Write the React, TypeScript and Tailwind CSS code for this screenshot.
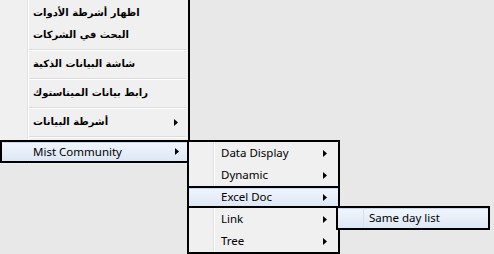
import React from "react";

const Arrow = () => (
  <svg width="4" height="7" viewBox="0 0 4 7" className="block">
    <path d="M0 0L4 3.5L0 7Z" fill="#000" />
  </svg>
);

const latin = { fontFamily: '"Segoe UI", "Noto Sans", "Open Sans", sans-serif' };
const arabic = { fontFamily: '"DejaVu Sans", "Noto Sans", sans-serif' };

const Sep = () => (
  <div className="h-[7px] flex flex-col justify-center ml-[29px] mr-[2px]">
    <div className="h-px bg-[#dcdcdc]" />
    <div className="h-px bg-white" />
  </div>
);

const ArRow = ({ label, sub }: { label: string; sub?: boolean }) => (
  <div className="h-[22px] flex items-center pl-[33px] pr-[10px]">
    <span dir="rtl" className="text-[10px] font-bold text-black leading-none flex-1 text-left" style={arabic}>
      {label}
    </span>
    {sub && <Arrow />}
  </div>
);

const Highlight = "border-2 border-black bg-gradient-to-b from-[#f1f6fc] to-[#dde7f5] shadow-[inset_0_1px_0_#c4d8f4]";

const SubRow = ({ label, hl }: { label: string; hl?: boolean }) => (
  <div
    className={
      "h-[22px] flex items-center pr-[11px] " +
      (hl ? Highlight + " -mx-[2px] pl-[32px] relative z-10" : "pl-[32px]")
    }
  >
    <span className="text-[11.5px] text-black flex-1 leading-none" style={latin}>
      {label}
    </span>
    <Arrow />
  </div>
);

export default function App() {
  return (
    <div className="relative w-[494px] h-[254px] bg-[#e8e8e8] overflow-hidden">
      {/* Main menu */}
      <div className="relative w-[190px] h-[164px] bg-[#f0f0f0] border-r-2 border-black pt-[2px] flex flex-col">
        <div className="absolute left-[27px] top-0 bottom-0 w-[2px] flex">
          <div className="w-px bg-[#e2e2e2]" />
          <div className="w-px bg-white" />
        </div>
        <div className="relative flex flex-col">
          <ArRow label="اظهار أشرطة الأدوات" />
          <ArRow label="البحث في الشركات" />
          <Sep />
          <ArRow label="شاشة البيانات الذكية" />
          <Sep />
          <ArRow label="رابط بيانات الميتاستوك" />
          <Sep />
          <ArRow label="أشرطة البيانات" sub />
          <Sep />
          <div className={"h-[23px] flex items-center pl-[31px] pr-[9px] -mr-[2px] " + Highlight}>
            <span className="text-[11.5px] text-black flex-1 leading-none" style={latin}>
              Mist Community
            </span>
            <Arrow />
          </div>
        </div>
      </div>

      {/* Submenu 1 */}
      <div className="absolute left-[187px] top-[140px] w-[153px] h-[114px] bg-[#f0f0f0] border-2 border-black flex flex-col">
        <div className="absolute left-[24px] top-0 bottom-0 w-[2px] flex">
          <div className="w-px bg-[#e2e2e2]" />
          <div className="w-px bg-white" />
        </div>
        <SubRow label="Data Display" />
        <SubRow label="Dynamic" />
        <SubRow label="Excel Doc" hl />
        <SubRow label="Link" />
        <SubRow label="Tree" />
      </div>

      {/* Submenu 2 */}
      <div className={"absolute left-[336px] top-[206px] w-[154px] h-[24px] flex items-center pl-[31px] " + Highlight}>
        <div className="absolute left-[25px] top-0 bottom-0 w-px bg-[#d8e0ea]" />
        <span className="text-[11.5px] text-black leading-none" style={latin}>
          Same day list
        </span>
      </div>
    </div>
  );
}
